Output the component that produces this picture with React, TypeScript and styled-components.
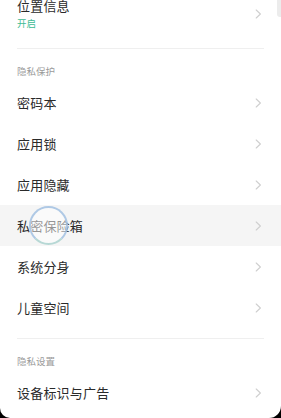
import { createGlobalStyle, styled } from "styled-components";

const GlobalStyle = createGlobalStyle`
  html, body {
    margin: 0;
    padding: 0;
    background: #000000;
  }
  body {
    font-family: "Noto Sans CJK SC", "Noto Sans", sans-serif;
  }
`;

const Screen = styled.div`
  width: 281px;
  height: 418px;
  background: #000000;
  overflow: hidden;
`;

const Panel = styled.div`
  position: relative;
  height: 100%;
  background: #ffffff;
  border-radius: 0 0 12px 10px;
  overflow: hidden;
`;

const ScrollThumb = styled.div`
  position: absolute;
  top: -6px;
  right: -2px;
  width: 6px;
  height: 23px;
  border-radius: 3px;
  background: #ececec;
`;

const List = styled.div`
  display: flex;
  flex-direction: column;
  margin-top: -14px;
`;

const Row = styled.div<{ $pressed?: boolean; $tall?: boolean }>`
  position: relative;
  display: flex;
  align-items: center;
  justify-content: space-between;
  height: ${(p) => (p.$tall ? "auto" : "41px")};
  padding: ${(p) => (p.$tall ? "11px 19px 18px 17px" : "0 19px 0 17px")};
  background: ${(p) => (p.$pressed ? "#f5f5f5" : "transparent")};
`;

const Texts = styled.div`
  display: flex;
  flex-direction: column;
  gap: 2px;
`;

const Title = styled.span`
  font-size: 13px;
  line-height: 18px;
  color: #2a2a2a;
  letter-spacing: 0.2px;
`;

const Sub = styled.span`
  font-size: 9.5px;
  line-height: 13px;
  color: #3dbb94;
`;

const Divider = styled.div<{ $gap: number }>`
  height: 1px;
  margin: ${(p) => p.$gap}px 17px 0 17px;
  background: #efefef;
`;

const Header = styled.div`
  padding: 16px 17px 4px 17px;
  font-size: 9.5px;
  line-height: 13px;
  color: #9a9a9a;
`;

const Ripple = styled.div`
  position: absolute;
  left: 29px;
  top: 1px;
  width: 39px;
  height: 39px;
  box-sizing: border-box;
  border-radius: 50%;
  border: 2px solid rgba(150, 185, 222, 0.75);
  border-bottom-color: rgba(160, 205, 200, 0.75);
  background: rgba(255, 255, 255, 0.5);
`;

function Chevron() {
  return (
    <svg width="7" height="10" viewBox="0 0 7 10">
      <path
        d="M1.2 1 L5.4 5 L1.2 9"
        fill="none"
        stroke="#cfcfcf"
        strokeWidth="1.1"
        strokeLinecap="round"
        strokeLinejoin="round"
      />
    </svg>
  );
}

const privacy = ["密码本", "应用锁", "应用隐藏", "私密保险箱", "系统分身", "儿童空间"];

export default function App() {
  return (
    <Screen>
      <GlobalStyle />
      <Panel>
        <ScrollThumb />
        <List>
          <Row $tall>
            <Texts>
              <Title>位置信息</Title>
              <Sub>开启</Sub>
            </Texts>
            <Chevron />
          </Row>
          <Divider $gap={0} />
          <Header>隐私保护</Header>
          {privacy.map((label) => (
            <Row key={label} $pressed={label === "私密保险箱"}>
              <Title>{label}</Title>
              {label === "私密保险箱" && <Ripple />}
              <Chevron />
            </Row>
          ))}
          <Divider $gap={10} />
          <Header>隐私设置</Header>
          <Row>
            <Title>设备标识与广告</Title>
            <Chevron />
          </Row>
        </List>
      </Panel>
    </Screen>
  );
}
